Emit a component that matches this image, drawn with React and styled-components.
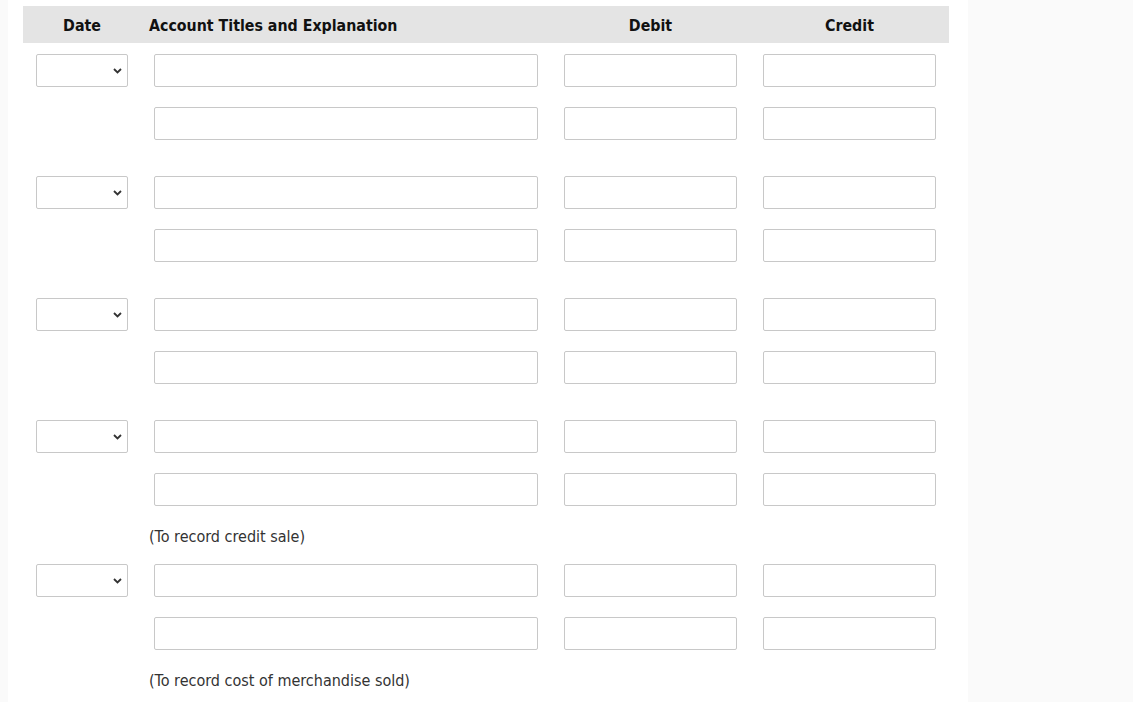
import styled, { createGlobalStyle } from "styled-components";

const GlobalStyle = createGlobalStyle`
  html, body {
    margin: 0;
    padding: 0;
    background: #fafafa;
  }
`;

const Panel = styled.div`
  margin-left: 8px;
  width: 960px;
  min-height: 702px;
  background: #ffffff;
  padding: 6px 0 0 15px;
  box-sizing: border-box;
  font-family: "DejaVu Sans Condensed", "DejaVu Sans", sans-serif;
  color: #222;
`;

const Journal = styled.div`
  width: 926px;
  display: flex;
  flex-direction: column;
`;

const Row = styled.div`
  display: grid;
  grid-template-columns: 118px 410px 199px 199px;
  align-items: center;
  height: ${(p) => p.$height || 53}px;
`;

const Header = styled(Row)`
  background: #e4e4e4;
  height: 37px;
  margin-bottom: 1px;
  padding-top: 1px;
  box-sizing: border-box;
`;

const HeadCell = styled.div`
  font-size: 15.8px;
  font-weight: bold;
  color: #111;
  text-align: ${(p) => p.$align || "center"};
  padding-left: ${(p) => (p.$align === "left" ? "8px" : "0")};
`;

const Cell = styled.div`
  padding: 0 13px;
  display: flex;
  align-items: center;
`;

const TextBox = styled.input`
  width: 100%;
  height: 33px;
  box-sizing: border-box;
  border: 1px solid #c8c8c8;
  border-radius: 2px;
  background: #fff;
  outline: none;
  font: inherit;
`;

const SelectBox = styled.div`
  position: relative;
  width: 92px;
  height: 33px;
  box-sizing: border-box;
  border: 1px solid #c8c8c8;
  border-radius: 2px;
  background: #fff;

  svg {
    position: absolute;
    right: 5px;
    top: 13px;
  }
`;

const Caption = styled.div`
  grid-column: 2 / 3;
  padding: 2px 0 0 8px;
  font-size: 16px;
  color: #333;
`;

const Spacer = styled.div`
  height: 16px;
`;

const groups = [
  { caption: null },
  { caption: null },
  { caption: null },
  { caption: "(To record credit sale)" },
  { caption: "(To record cost of merchandise sold)" },
];

function DateSelect() {
  return (
    <SelectBox>
      <svg width="9" height="6" viewBox="0 0 9 6">
        <path d="M1 1l3.5 3.5L8 1" fill="none" stroke="#333" strokeWidth="1.8" />
      </svg>
    </SelectBox>
  );
}

function EntryLine({ withDate }) {
  return (
    <Row>
      <Cell>{withDate && <DateSelect />}</Cell>
      <Cell>
        <TextBox />
      </Cell>
      <Cell>
        <TextBox />
      </Cell>
      <Cell>
        <TextBox />
      </Cell>
    </Row>
  );
}

export default function App() {
  return (
    <>
      <GlobalStyle />
      <Panel>
        <Journal>
          <Header>
            <HeadCell>Date</HeadCell>
            <HeadCell $align="left">Account Titles and Explanation</HeadCell>
            <HeadCell>Debit</HeadCell>
            <HeadCell>Credit</HeadCell>
          </Header>
          {groups.map((g, i) => (
            <div key={i}>
              <EntryLine withDate />
              <EntryLine />
              {g.caption ? (
                <Row $height={38}>
                  <Caption>{g.caption}</Caption>
                </Row>
              ) : (
                <Spacer />
              )}
            </div>
          ))}
        </Journal>
      </Panel>
    </>
  );
}
